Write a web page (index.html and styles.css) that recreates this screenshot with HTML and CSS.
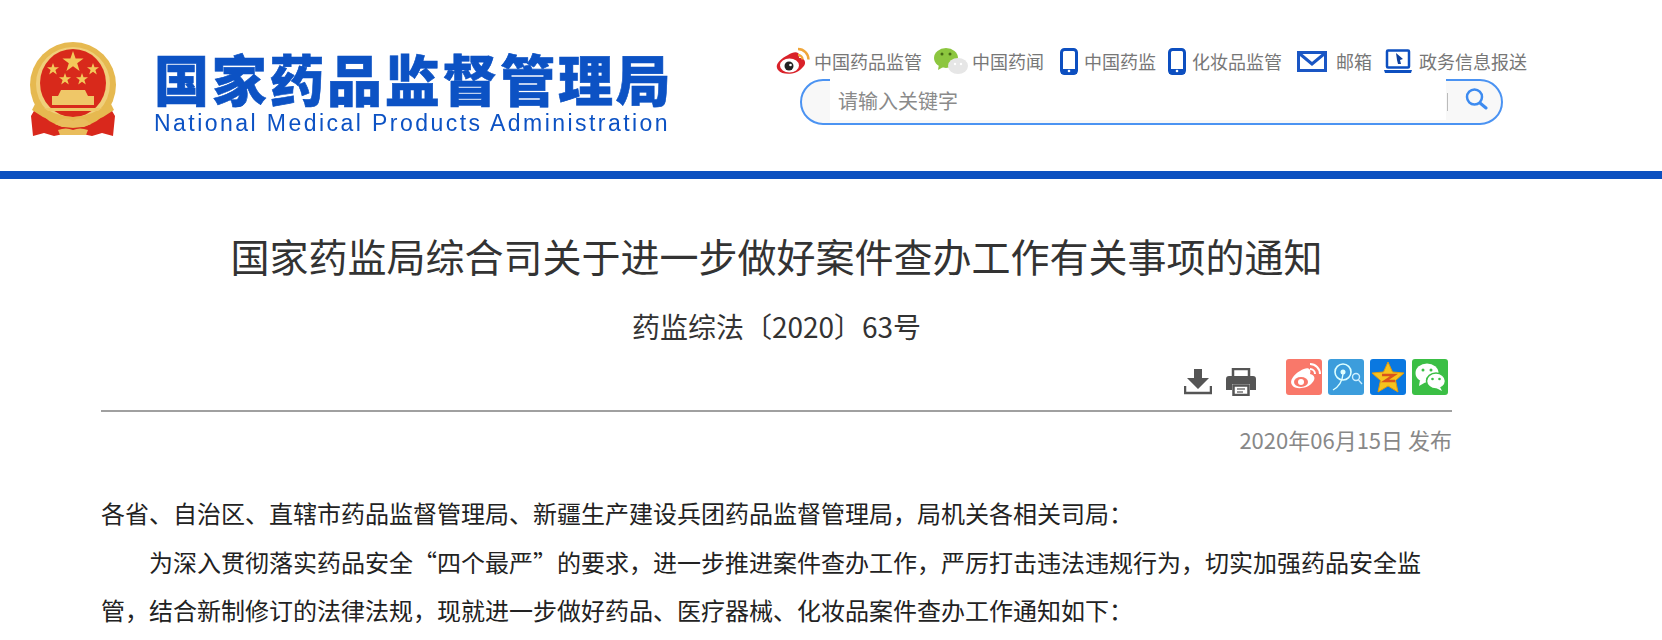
FILE: index.html
```html
<!DOCTYPE html>
<html lang="en">
<head>
    <meta charset="UTF-8">
    <meta name="viewport" content="width=device-width, initial-scale=1.0">
    <title>国家药品监督管理局</title>
    <link rel="stylesheet" href="styles.css">
</head>

<body>
    <!-- Site header -->
    <header class="site-header">
        <div class="logo">
            <svg class="emblem" width="90" height="96" viewBox="0 0 90 96">
                <path d="M10 62 L3 74 L5 94 L16 91 L26 94 L45 90 L64 94 L74 91 L85 94 L87 74 L80 62 Z" fill="#d9281c"/>
                <ellipse cx="45" cy="43" rx="43" ry="43" fill="#e6b950"/>
                <ellipse cx="45" cy="42" rx="37" ry="37" fill="#f0cf7a"/>
                <ellipse cx="45" cy="41" rx="33" ry="34" fill="#d8291b"/>
                <path d="M8 60 Q45 90 82 60 L86 68 Q45 98 4 68 Z" fill="#e6b950"/>
                <path d="M45 9 l2.600 7.500 h8 l-6.400 4.800 2.400 7.700 -6.600 -4.700 -6.600 4.700 2.400 -7.700 -6.400 -4.800 h8 z" fill="#f3c95a"/>
                <path d="M25 21 l1.500 4.200 h4.500 l-3.600 2.800 1.400 4.400 -3.800 -2.600 -3.800 2.600 1.400 -4.400 -3.600 -2.800 h4.500 z" fill="#f3c95a"/>
                <path d="M65 21 l1.500 4.200 h4.500 l-3.600 2.800 1.400 4.400 -3.800 -2.600 -3.800 2.600 1.400 -4.400 -3.600 -2.800 h4.500 z" fill="#f3c95a"/>
                <path d="M37 31 l1.500 4.200 h4.500 l-3.600 2.800 1.400 4.400 -3.800 -2.600 -3.800 2.600 1.400 -4.400 -3.600 -2.800 h4.500 z" fill="#f3c95a"/>
                <path d="M54 31 l1.500 4.200 h4.500 l-3.600 2.800 1.400 4.400 -3.800 -2.600 -3.800 2.600 1.400 -4.400 -3.600 -2.800 h4.500 z" fill="#f3c95a"/>
                <path d="M33 48 h24 l3 6 h6 v9 H24 v-9 h6 z" fill="#efc768"/>
                <path d="M16 66 h58 l-4 3 H20 z" fill="#efc768"/>
                <path d="M27 82 q9 -9 18 -3 q9 -6 18 3 l-7 3 H34 z" fill="#e9bd5c"/>
                <path d="M30 88 q8 -3 15 0 q7 -3 15 0 l-2 5 H32 z" fill="#e9bd5c"/>
            </svg>
            <div class="wordmark">
                <div class="wordmark-cn">国家药品监督管理局</div>
                <div class="wordmark-en">National Medical Products Administration</div>
            </div>
        </div>

        <div class="header-tools">
            <nav class="top-nav">
                <a class="nav-item">
                    <svg width="34" height="28" viewBox="0 0 34 28">
                        <path d="M12 8 C19 3 25 5 23 11 C29 11 31 16 27 20 C21 28 7 29 2 23 C-2 18 4 12 12 8 Z" fill="#d9222a"/>
                        <ellipse cx="13.500" cy="18.500" rx="9.500" ry="7" fill="#fff"/>
                        <circle cx="13" cy="19" r="4.500" fill="#222"/>
                        <circle cx="14.500" cy="18" r="1.300" fill="#fff"/>
                        <path d="M22 8 a4.500 4.500 0 0 1 4.500 4.500 M22 2 a10.500 10.500 0 0 1 10.500 10.500" fill="none" stroke="#f0a63a" stroke-width="2.400"/>
                    </svg>
                    <span>中国药品监管</span>
                </a>
                <a class="nav-item">
                    <svg width="34" height="28" viewBox="0 0 34 28">
                        <ellipse cx="12" cy="11" rx="12" ry="10" fill="#8cc63f"/>
                        <path d="M5 17 L4 23 L11 19 Z" fill="#8cc63f"/>
                        <circle cx="8" cy="7" r="1.500" fill="#456b14"/>
                        <circle cx="16" cy="7" r="1.500" fill="#456b14"/>
                        <ellipse cx="24" cy="19" rx="10" ry="8" fill="#e6e6e6"/>
                        <circle cx="21" cy="17" r="1.200" fill="#fff"/>
                        <circle cx="27" cy="17" r="1.200" fill="#fff"/>
                    </svg>
                    <span>中国药闻</span>
                </a>
                <a class="nav-item nav-phone">
                    <svg width="18" height="27" viewBox="0 0 18 27">
                        <rect x="1.500" y="1.500" width="15" height="24" rx="3" fill="#fff" stroke="#0d4fc0" stroke-width="3"/>
                        <rect x="1" y="21" width="16" height="5" fill="#0d4fc0"/>
                        <circle cx="9" cy="23" r="1.300" fill="#fff"/>
                    </svg>
                    <span>中国药监</span>
                </a>
                <a class="nav-item nav-phone">
                    <svg width="18" height="27" viewBox="0 0 18 27">
                        <rect x="1.500" y="1.500" width="15" height="24" rx="3" fill="#fff" stroke="#0d4fc0" stroke-width="3"/>
                        <rect x="1" y="21" width="16" height="5" fill="#0d4fc0"/>
                        <circle cx="9" cy="23" r="1.300" fill="#fff"/>
                    </svg>
                    <span>化妆品监管</span>
                </a>
                <a class="nav-item nav-mail">
                    <svg width="30" height="21" viewBox="0 0 30 21">
                        <rect x="1.500" y="1.500" width="27" height="18" fill="none" stroke="#1a56c4" stroke-width="3"/>
                        <path d="M3 3 L15 13 L27 3" fill="none" stroke="#1a56c4" stroke-width="3"/>
                    </svg>
                    <span>邮箱</span>
                </a>
                <a class="nav-item nav-report">
                    <svg width="28" height="25" viewBox="0 0 28 25">
                        <rect x="3" y="1.500" width="22" height="17" rx="1" fill="none" stroke="#0d4fc0" stroke-width="2.500"/>
                        <path d="M12 4 L19 10 L16 11 L17 15 L14 15 L13 11 Z" fill="#0d3f9c"/>
                        <path d="M0 21 H28 L27 24 H1 Z" fill="#0d4fc0"/>
                    </svg>
                    <span>政务信息报送</span>
                </a>
            </nav>
            <div class="search-box">
                <div class="search-input">请输入关键字</div>
                <div class="search-btn">
                    <svg width="24" height="24" viewBox="0 0 24 24">
                        <circle cx="10.500" cy="10" r="7.500" fill="none" stroke="#3d8bf0" stroke-width="2.500"/>
                        <path d="M16 16 L22 21" stroke="#3d8bf0" stroke-width="3" stroke-linecap="round"/>
                    </svg>
                </div>
            </div>
        </div>
    </header>

    <!-- Article -->
    <main class="article">
        <h1 class="article-title">国家药监局综合司关于进一步做好案件查办工作有关事项的通知</h1>
        <p class="article-no">药监综法〔2020〕63号</p>

        <div class="article-tools">
            <svg class="tool-icon" width="28" height="26" viewBox="0 0 28 26">
                <path d="M10 0 H18 V9 H25 L14 20 L3 9 H10 Z" fill="#555"/>
                <path d="M1 17 V24 H27 V17" fill="none" stroke="#555" stroke-width="2.500"/>
            </svg>
            <svg class="tool-icon" width="30" height="28" viewBox="0 0 30 28">
                <path d="M7 8 V1 H23 V8" fill="none" stroke="#555" stroke-width="2.500"/>
                <path d="M3 8 H27 Q30 8 30 11 V22 H24 V16 H6 V22 H0 V11 Q0 8 3 8 Z" fill="#555"/>
                <rect x="7.500" y="17.500" width="15" height="9.500" fill="#fff" stroke="#555" stroke-width="2.500"/>
                <path d="M11 21 H19 M11 24 H17" stroke="#777" stroke-width="1.500"/>
            </svg>
            <div class="share-list">
                <svg class="share-icon" width="36" height="36" viewBox="0 0 36 36">
                    <rect width="36" height="36" rx="3" fill="#f9786a"/>
                    <path d="M14 12 C21 7 26 9 24 15 C29 16 30 20 26 24 C21 30 9 31 6 26 C3 22 8 15 14 12 Z" fill="#fff"/>
                    <ellipse cx="15" cy="23" rx="7" ry="5" fill="#f9786a"/>
                    <circle cx="15" cy="23" r="3" fill="#fff"/>
                    <path d="M24 10 a5 5 0 0 1 5 5 M24 5 a10 10 0 0 1 10 10" fill="none" stroke="#fff" stroke-width="2"/>
                </svg>
                <svg class="share-icon" width="36" height="36" viewBox="0 0 36 36">
                    <rect width="36" height="36" rx="3" fill="#3c9ddc"/>
                    <circle cx="15" cy="13" r="8" fill="none" stroke="#dff" stroke-width="1.600"/>
                    <circle cx="15" cy="13" r="2.500" fill="#dff"/>
                    <path d="M15 15 Q14 26 5 31" fill="none" stroke="#dff" stroke-width="1.400"/>
                    <circle cx="28" cy="18" r="3.500" fill="none" stroke="#cef" stroke-width="1.400"/>
                    <path d="M30.500 21 L34 25" stroke="#cef" stroke-width="1.400"/>
                </svg>
                <svg class="share-icon" width="36" height="36" viewBox="0 0 36 36">
                    <rect width="36" height="36" rx="3" fill="#0a78e0"/>
                    <path d="M18 3 L22.500 13 L34 14 L25.500 21.500 L28 33 L18 27 L8 33 L10.500 21.500 L2 14 L13.500 13 Z" fill="#f7c31e" stroke="#e09a10"/>
                    <path d="M12 16 H24 L15 22 H25" fill="none" stroke="#d9531e" stroke-width="2.500"/>
                </svg>
                <svg class="share-icon" width="36" height="36" viewBox="0 0 36 36">
                    <rect width="36" height="36" rx="3" fill="#3bbf45"/>
                    <ellipse cx="15" cy="14" rx="11.500" ry="9.500" fill="#fff"/>
                    <path d="M8 21 L7 27 L14 23 Z" fill="#fff"/>
                    <ellipse cx="24" cy="22" rx="9.500" ry="8" fill="#fff" stroke="#3bbf45" stroke-width="1.500"/>
                    <path d="M28 28 L30 32 L24 29 Z" fill="#fff"/>
                    <circle cx="11" cy="11" r="1.500" fill="#3bbf45"/>
                    <circle cx="19" cy="11" r="1.500" fill="#3bbf45"/>
                    <circle cx="20.500" cy="20" r="1.300" fill="#3bbf45"/>
                    <circle cx="27.500" cy="20" r="1.300" fill="#3bbf45"/>
                </svg>
            </div>
        </div>

        <div class="article-date">2020年06月15日 发布</div>

        <div class="article-body">
            <p>各省、自治区、直辖市药品监督管理局、新疆生产建设兵团药品监督管理局，局机关各相关司局：</p>
            <p class="indent">为深入贯彻落实药品安全“四个最严”的要求，进一步推进案件查办工作，严厉打击违法违规行为，切实加强药品安全监管，结合新制修订的法律法规，现就进一步做好药品、医疗器械、化妆品案件查办工作通知如下：</p>
        </div>
    </main>
</body>
</html>
```

FILE: styles.css
```css
html, body {
    margin: 0;
    height: 100%;
    overflow: hidden;
}

body {
    font-family: "Noto Sans CJK SC", "Liberation Sans", sans-serif;
    color: #333;
    background-color: #fff;
}

.site-header {
    display: flex;
    height: 171px;
    box-sizing: border-box;
    padding: 42px 0 0 28px;
    box-shadow: 0 8px 0 #0b50c0;
}

.logo {
    display: flex;
    align-items: flex-start;
    gap: 36px;
}

.emblem {
    filter: blur(.6px);
}

.wordmark {
    width: 517px;
    padding-top: 6px;
    color: #0c52c4;
    filter: blur(.4px);
}

.wordmark-cn {
    font-size: 55px;
    line-height: 58px;
    font-weight: 900;
    letter-spacing: 2.700px;
    white-space: nowrap;
    -webkit-text-stroke: .6px #0c52c4;
}

.wordmark-en {
    font-family: "Liberation Sans", sans-serif;
    font-size: 23px;
    line-height: 28px;
    letter-spacing: 2.450px;
    white-space: nowrap;
    margin-top: 3px;
}

.header-tools {
    margin: 5px 0 0 105px;
}

.top-nav {
    display: flex;
    align-items: center;
    gap: 12px;
    height: 28px;
    color: #777;
    font-size: 18px;
    white-space: nowrap;
}

.nav-item {
    display: flex;
    align-items: center;
    gap: 4px;
}

.nav-phone {
    gap: 6px;
}

.nav-phone:nth-child(3) {
    margin-left: 4px;
}

.nav-mail {
    gap: 9px;
    margin-left: 3px;
}

.nav-report {
    gap: 7px;
}

.search-box {
    display: flex;
    width: 703px;
    height: 46px;
    box-sizing: border-box;
    margin: 4px 0 0 24px;
    padding-left: 28px;
    background-color: #f8f8f8;
    border: 2px solid #4b93f2;
    border-radius: 23px;
}

.search-input {
    flex: 1;
    margin-top: -2px;
    height: 41px;
    padding-left: 8px;
    line-height: 43px;
    font-size: 20px;
    color: #8a8a8a;
    background-color: #fff;
}

.search-btn {
    width: 55px;
    padding-top: 6px;
    padding-left: 18px;
    box-sizing: border-box;
    position: relative;
}

.search-btn::before {
    content: "";
    position: absolute;
    left: 1px;
    top: 12px;
    height: 18px;
    border-left: 1px solid #bbb;
}

.article {
    width: 1351px;
    margin: 7px 0 0 101px;
}

.article-title {
    margin: 0;
    padding-top: 48px;
    font-size: 39px;
    line-height: 58px;
    font-weight: 400;
    text-align: center;
}

.article-no {
    margin: 22px 0 0;
    font-size: 28px;
    line-height: 40px;
    text-align: center;
}

.article-tools {
    display: flex;
    align-items: center;
    justify-content: flex-end;
    height: 36px;
    padding: 13px 4px 15px 0;
    border-bottom: 2px solid #a0a0a0;
}

.tool-icon {
    margin: 9px 0 0 14px;
}

.share-list {
    display: flex;
    gap: 6px;
    margin-left: 30px;
}

.article-date {
    margin-top: 12px;
    font-size: 22px;
    line-height: 30px;
    color: #888;
    text-align: right;
}

.article-body {
    margin-top: 35px;
    font-size: 24px;
    line-height: 48.500px;
    color: #222;
}

.article-body p {
    margin: 0;
}

.indent {
    text-indent: 2em;
}
```
